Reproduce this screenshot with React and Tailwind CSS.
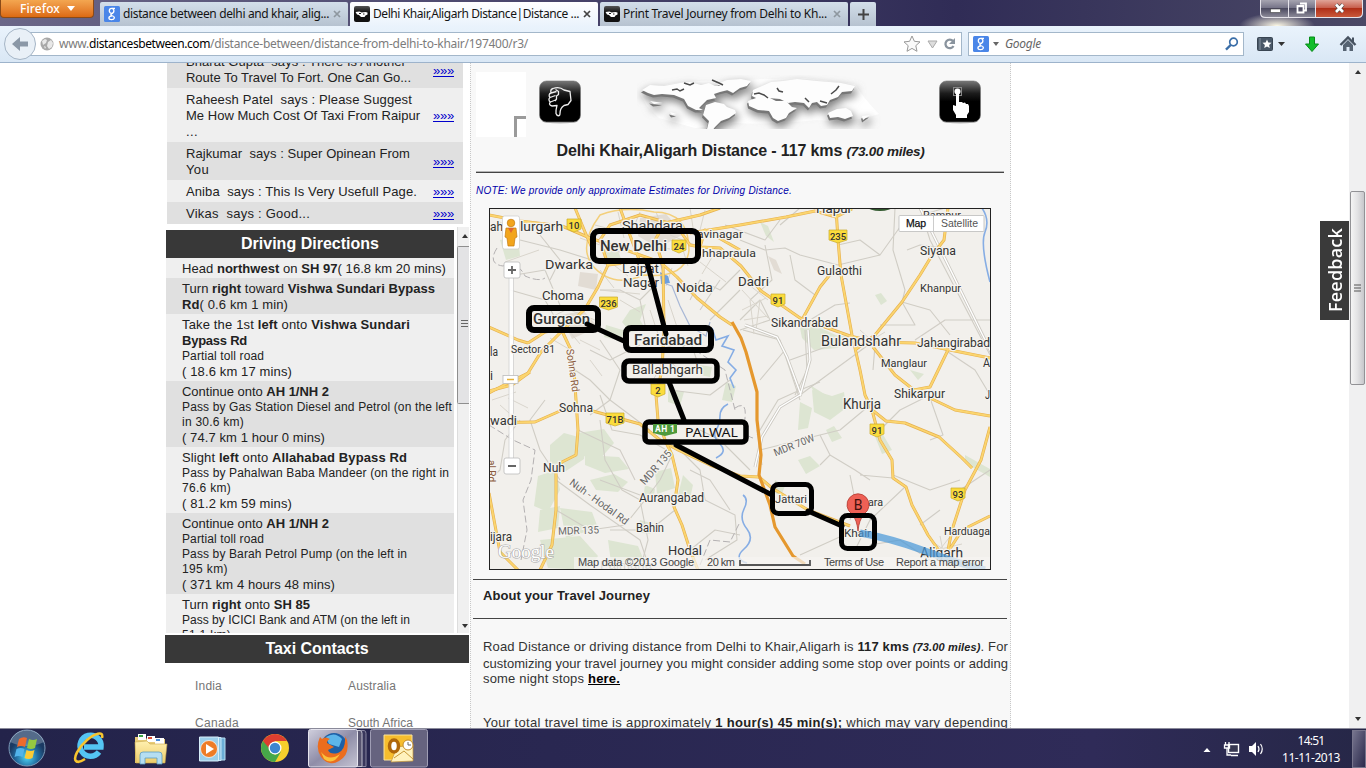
import React, { useLayoutEffect, useRef, useState } from "react";

// Text run spread or tightened to an exact advance width.
function Fit({ w, className = "", children }) {
  const ref = useRef(null);
  const [spacing, setSpacing] = useState(0);
  useLayoutEffect(() => {
    const el = ref.current;
    const natural = el.getBoundingClientRect().width;
    setSpacing((w - natural) / Math.max(1, el.textContent.length));
  }, [w]);
  return (
    <span ref={ref} className={`inline-block whitespace-pre ${className}`} style={{ letterSpacing: spacing }}>
      {children}
    </span>
  );
}

const GoogleFav = () => (
  <svg className="h-4 w-4 shrink-0" viewBox="0 0 16 16">
    <rect width="16" height="16" rx="1.5" fill="#4a86e8" />
    <g fill="none" stroke="#fff" strokeWidth="1.3">
      <ellipse cx="7.600" cy="4.800" rx="2.300" ry="2.500" />
      <path d="M8 2.300h3M9 7.100c-2 .8-3 1.600-1.200 2.400c2.600.8 2.800 1.600 2.500 2.700c-.5 2-5.300 1.900-5.400-.2c0-1.600 2-2.200 3.500-2.200" />
    </g>
  </svg>
);

const MapFav = () => (
  <svg className="h-4 w-4 shrink-0" viewBox="0 0 16 16">
    <defs><linearGradient id="fav" x2="0" y2="1"><stop offset="0" stopColor="#555" /><stop offset=".4" stopColor="#111" /></linearGradient></defs>
    <rect width="16" height="16" rx="2" fill="url(#fav)" />
    <path d="M1.500 6l4-.5 2 1 4-.5 2 .5v2l-2 1-1 1.500H7l-2-2-2-.5z" fill="#fff" />
    <path d="M5 7.500h2M9 8h1.500" stroke="#222" />
  </svg>
);

function Tab({ fav, title, w, active }) {
  return (
    <div
      className={
        "mr-[2px] mt-[2px] flex h-6 w-[248px] items-center rounded-t-[2px] pl-[4px] " +
        (active ? "bg-linear-to-b from-white to-[#eaf3fc]" : "bg-linear-to-b from-[#d3dfea] to-[#b6c2d0]")
      }
    >
      {fav}
      <span className="ml-[3px] w-[210px] text-[12px] text-[#141414]">
        <Fit w={w}>{title}</Fit>
      </span>
      <svg className="h-2 w-2" viewBox="0 0 8 8">
        <path d="M1 1l6 6M7 1l-6 6" stroke={active ? "#444" : "#8e979f"} strokeWidth="1.7" />
      </svg>
    </div>
  );
}

function TabStrip() {
  return (
    <div className="flex h-[26px] items-start bg-linear-to-r from-[#6b6788] via-[#302c56] via-70% to-[#4b4966]">
      <div className="flex h-[18px] w-[94px] items-center rounded-b-[4px] border border-t-0 border-[#8a4a18] bg-linear-to-b from-[#f3a650] to-[#dc6a10] pl-[19px] text-[12px] font-medium leading-[16px] text-white">
        <Fit w={40}>Firefox</Fit>
        <svg className="ml-[7px] h-[5px] w-[8px]" viewBox="0 0 8 5">
          <path d="M0 0h8L4 5z" fill="#fff" />
        </svg>
      </div>
      <div className="ml-[6px] flex">
        <Tab fav={<GoogleFav />} title="distance between delhi and khair, alig..." w={206} />
        <Tab fav={<MapFav />} title="Delhi Khair,Aligarh Distance|Distance ..." w={206} active />
        <Tab fav={<MapFav />} title="Print Travel Journey from Delhi to Kh..." w={204} />
        <div className="mt-[2px] flex h-6 w-[26px] items-center justify-center rounded-t-[2px] bg-linear-to-b from-[#d3dfea] to-[#b6c2d0]">
          <svg className="h-[11px] w-[11px]" viewBox="0 0 11 11">
            <path d="M5.500 0v11M0 5.500h11" stroke="#444" strokeWidth="2" />
          </svg>
        </div>
      </div>
      <svg className="ml-auto h-[26px] w-[131px]" viewBox="1235 0 131 26">
        <defs>
          <radialGradient id="glow"><stop offset="0" stopColor="#fffbe8" /><stop offset="1" stopColor="#fffbe8" stopOpacity="0" /></radialGradient>
          <linearGradient id="btn" x2="0" y2="1"><stop offset="0" stopColor="#a6a4b0" /><stop offset=".45" stopColor="#777589" /><stop offset=".5" stopColor="#4c4a60" /><stop offset="1" stopColor="#8b8998" /></linearGradient>
          <linearGradient id="cls" x2="0" y2="1"><stop offset="0" stopColor="#e0a498" /><stop offset=".45" stopColor="#c8604e" /><stop offset=".5" stopColor="#b02f18" /><stop offset="1" stopColor="#c9583a" /></linearGradient>
        </defs>
        <ellipse cx="1277" cy="26" rx="38" ry="13" fill="url(#glow)" />
        <path d="M1260 0h103v13q0 5-5 5h-93q-5 0-5-5z" fill="#e5e3ea" />
        <path d="M1261 0h27v17h-22q-5 0-5-4z" fill="url(#btn)" />
        <path d="M1289 0h26v17h-26z" fill="url(#btn)" />
        <path d="M1316 0h46v13q0 4-5 4h-41z" fill="url(#cls)" />
        <rect x="1270.500" y="9" width="10" height="3.500" fill="#fff" stroke="#444" strokeWidth=".6" />
        <path d="M1300 3.500h6v7h-2M1297.500 6h6v6.500h-6z" fill="none" stroke="#fff" strokeWidth="1.800" />
        <path d="M1336 4.500l7 7.500M1343 4.500l-7 7.500" stroke="#444" strokeWidth="4" />
        <path d="M1336 4.500l7 7.500M1343 4.500l-7 7.500" stroke="#fff" strokeWidth="2.600" />
      </svg>
    </div>
  );
}

function NavBar() {
  return (
    <div className="flex h-[37px] items-center border-b border-[#9db3cb] bg-linear-to-b from-[#eaf3fc] to-[#d9e7f5]">
      <svg className="h-9 w-10 shrink-0" viewBox="0 0 40 36">
        <path d="M30 6.500h10v23H30z" fill="#fff" />
        <path d="M28 6.500h12M28 29.500h12" stroke="#a3b7ca" />
        <circle cx="20" cy="18" r="15.500" fill="#e9f0f7" stroke="#a5b5c6" />
        <path d="M12 18l8-7v4.500h8v5h-8V25z" fill="#8b98a7" />
      </svg>
      <div className="flex h-6 w-[922px] items-center border border-l-0 border-[#a3b7ca] bg-white text-[12px] text-[#7c7c7c]">
        <svg className="h-[14px] w-[14px]" viewBox="0 0 14 14">
          <circle cx="7" cy="7" r="6.500" fill="#a8a8a8" />
          <path d="M2 4l3-2 2 1-1 3-3 2zM8 5l3-2 2 3-1 4-3 2-2-3zM4 9l2 1-1 2z" fill="#e8e8e8" />
        </svg>
        <span className="ml-[5px] flex">
          <Fit w={30}>www.</Fit>
          <Fit w={121} className="text-black">distancesbetween.com</Fit>
          <Fit w={318}>/distance-between/distance-from-delhi-to-khair/197400/r3/</Fit>
        </span>
        <svg className="ml-auto mr-[3px] h-[20px] w-[54px]" viewBox="904 34 54 20">
          <path d="M912 36l2.400 5.300 5.600.6-4.200 3.800 1.200 5.600-5-2.900-5 2.900 1.200-5.600-4.200-3.800 5.600-.6z" fill="#fafafa" stroke="#999" />
          <path d="M928 41h9l-4.500 7z" fill="#ddd" stroke="#aaa" />
          <path d="M953 41a4.300 4.300 0 1 0 .5 5" fill="none" stroke="#8a949e" strokeWidth="2.300" />
          <path d="M955 38v6h-6z" fill="#8a949e" />
        </svg>
      </div>
      <div className="ml-[6px] flex h-6 w-[276px] items-center border border-[#a3b7ca] bg-white pl-[4px] text-[12px] text-[#666]">
        <GoogleFav />
        <svg className="ml-[4px] h-[4px] w-[6px]" viewBox="0 0 6 4"><path d="M0 0h6L3 4z" fill="#666" /></svg>
        <Fit w={36} className="ml-[6px] italic">Google</Fit>
        <svg className="ml-auto mr-[4px] h-[14px] w-[14px]" viewBox="0 0 14 14">
          <circle cx="8.500" cy="5" r="3.800" fill="#fff" stroke="#3a6ea8" strokeWidth="1.700" />
          <path d="M5.700 8L1 12.700" stroke="#3a6ea8" strokeWidth="2.400" />
        </svg>
      </div>
      <svg className="h-6 w-[122px]" viewBox="1244 32 122 24">
        <rect x="1257.500" y="37.500" width="15" height="13" rx="1" fill="#4a5868" stroke="#394552" />
        <path d="M1260 38v12" stroke="#8794a1" />
        <path d="M1267 39.500l1.300 2.900 3.200.3-2.400 2.200.7 3.100-2.800-1.600-2.800 1.600.7-3.100-2.400-2.200 3.200-.3z" fill="#fff" />
        <path d="M1278 42h7l-3.500 4z" fill="#333" />
        <path d="M1309.500 37h5v7h4l-6.500 7.500-6.500-7.500h4z" fill="#12bd2b" stroke="#078c18" />
        <path d="M1340.500 45l7.500-7.500 7.500 7.500" fill="none" stroke="#465260" strokeWidth="2.400" />
        <path d="M1343 45l5-5 5 5v6h-3.500v-4h-3v4h-3.500z" fill="#566372" />
        <path d="M1352 37.500h2v5h-2z" fill="#465260" />
      </svg>
    </div>
  );
}

const comments = [
  { h: "h-[25px]", bg: "bg-[#e0e0e0]", lines: [["Bharat Gupta  says : There Is Another", 220], ["Route To Travel To Fort. One Can Go...", 225]], tail: true },
  { h: "h-[54px]", bg: "bg-[#efefef]", lines: [["Raheesh Patel  says : Please Suggest", 226], ["Me How Much Cost Of Taxi From Raipur", 234], ["...", 12]] },
  { h: "h-[38px]", bg: "bg-[#e0e0e0]", lines: [["Rajkumar  says : Super Opinean From", 224], ["You", 23]] },
  { h: "h-[22px]", bg: "bg-[#efefef]", lines: [["Aniba  says : This Is Very Usefull Page.", 231]] },
  { h: "h-[22px]", bg: "bg-[#e0e0e0]", lines: [["Vikas  says : Good...", 124]] },
];

function Comments() {
  return (
    <div className="ml-[2px] w-[296px]">
      {comments.map((c, i) => (
        <div key={i} className={`flex ${c.h} ${c.bg} overflow-hidden pl-[19px] ${c.tail ? "items-end pb-[2px]" : "items-center pt-[1px]"}`}>
          <div className="flex w-[247px] flex-col text-[13px] leading-[16px] text-[#222]">
            {c.lines.map(([t, w]) => (
              <div key={t}><Fit w={w}>{t}</Fit></div>
            ))}
          </div>
          <Fit w={21} className={`border-b border-[#0000cc] text-[13px] leading-[11px] text-[#0000cc] ${c.tail ? "mb-[9px]" : "mt-[1px]"}`}>»»»</Fit>
        </div>
      ))}
    </div>
  );
}

const B = ({ children }) => <b className="font-bold">{children}</b>;

const steps = [
  { h: "h-[20px]", rows: [[<>Head <B>northwest</B> on <B>SH 97</B>( 16.8 km 20 mins)</>, 264]] },
  { h: "h-[36px]", rows: [[<>Turn <B>right</B> toward <B>Vishwa Sundari Bypass</B></>, 253], [<><B>Rd</B>( 0.6 km 1 min)</>, 106]] },
  { h: "h-[67px]", rows: [[<>Take the 1st <B>left</B> onto <B>Vishwa Sundari</B></>, 228], [<B>Bypass Rd</B>, 65], ["Partial toll road", 82, 1], ["( 18.6 km 17 mins)", 110]] },
  { h: "h-[66px]", rows: [[<>Continue onto <B>AH 1/NH 2</B></>, 147], ["Pass by Gas Station Diesel and Petrol (on the left", 270, 1], ["in 30.6 km)", 62, 1], ["( 74.7 km 1 hour 0 mins)", 143]] },
  { h: "h-[66px]", rows: [[<>Slight <B>left</B> onto <B>Allahabad Bypass Rd</B></>, 225], ["Pass by Pahalwan Baba Mandeer (on the right in", 267, 1], ["76.6 km)", 49, 1], ["( 81.2 km 59 mins)", 110]] },
  { h: "h-[81px]", rows: [[<>Continue onto <B>AH 1/NH 2</B></>, 147], ["Partial toll road", 82, 1], ["Pass by Barah Petrol Pump (on the left in", 225, 1], ["195 km)", 46, 1], ["( 371 km 4 hours 48 mins)", 153]] },
  { h: "h-[39px]", rows: [[<>Turn <B>right</B> onto <B>SH 85</B></>, 128], ["Pass by ICICI Bank and ATM (on the left in", 228, 1], ["51.1 km)", 49, 1]] },
];

function Directions() {
  return (
    <div className="mt-[3px] flex h-[406px]">
      <div className="ml-[1px] w-[288px] pt-[3px]">
        <div className="flex h-7 items-center justify-center bg-[#383838] text-[16px] font-bold text-white">
          <Fit w={138}>Driving Directions</Fit>
        </div>
        {steps.map((s, i) => (
          <div key={i} className={`${s.h} ${i % 2 ? "bg-[#e0e0e0]" : "bg-[#efefef]"} overflow-hidden pl-[16px] pt-[3px] text-[#222]`}>
            {s.rows.map(([t, w, small], j) => (
              <div key={j} className={small ? "h-[15px] text-[12px] leading-[15px]" : "h-[16px] text-[13px] leading-[16px]"}>
                <Fit w={w}>{t}</Fit>
              </div>
            ))}
          </div>
        ))}
      </div>
      <svg className="ml-[3px] h-[406px] w-[12px]" viewBox="458 227 12 406">
        <path d="M458 227h12v406h-12z" fill="#f0f0f0" />
        <path d="M458.500 227v406" stroke="#ddd" />
        <path d="M463 238h6l-3-4z" fill="#333" />
        <path d="M463 624h6l-3 4z" fill="#333" />
        <rect x="458.500" y="246.500" width="14" height="157" rx="1" fill="#e3e3e5" stroke="#8e8e8e" />
        <path d="M462 320.500h7M462 323.500h7M462 326.500h7" stroke="#666" />
      </svg>
    </div>
  );
}

function Taxi() {
  return (
    <div className="mt-[2px]">
      <div className="flex h-7 items-center justify-center bg-[#383838] text-[16px] font-bold text-white">
        <Fit w={103}>Taxi Contacts</Fit>
      </div>
      <div className="grid grid-cols-[153px_1fr] gap-y-[21px] pl-[30px] pt-[15px] text-[12px] leading-[16px] text-[#757575]">
        <div><Fit w={27}>India</Fit></div>
        <div><Fit w={48}>Australia</Fit></div>
        <div><Fit w={44}>Canada</Fit></div>
        <div><Fit w={65}>South Africa</Fit></div>
      </div>
    </div>
  );
}

const Tile = ({ children }) => (
  <svg className="h-[44px] w-[42px] shrink-0" viewBox="0 0 42 44">
    <defs><linearGradient id="tile" x2="0" y2="1"><stop offset="0" stopColor="#777" /><stop offset=".3" stopColor="#1c1c1c" /><stop offset=".5" stopColor="#000" /></linearGradient></defs>
    <ellipse cx="21" cy="41" rx="18" ry="2.500" fill="#bbb" />
    <rect x=".5" y="1" width="41" height="41" rx="7" fill="url(#tile)" stroke="#777" strokeWidth=".6" />
    {children}
  </svg>
);

const continents = [
  "M642 90l8-5 14 1 16-3 10-1 11 3 8-2 6 3 10 0 3 4-8 2-6 2 2 4-9 2-5 5-3 3 4 2-7 0-8-4-4-7-10-4-12-1-8 1-6-2z",
  "M706 105l9-3 9 2 3 3 8 3 1 3-7 5-8 3-6 6-3 4-5-2 2-8-6-6z",
  "M717 84l10-4 14-1 10 2-4 5-7 2-7 5-6-3z",
  "M748 101l8-3 14 0 6 3 10 0 6 6 5 1-8 5-3 5-8 3-5-3-4-7-11-1-9-4z",
  "M752 96l1-6 9-4 9-4 12-1 14-2 20 2 24 2 14 3-3 5-10 1-4 5-8 3-3 5-6 1-4-4-5 1-3 5-5-5-9-1-7 1-8-4-12-1-10 1z",
  "M828 113l9-4 9-1 5 3 2 5-8 3-7-2-8 1z",
  "M650 101l13 2-9 1zM670 112l7 2-5 1zM862 116l8-1-7 5zM785 109l4-2-2 6z",
];

function WorldMap() {
  return (
    <svg className="h-[54px] w-[244px]" viewBox="637 75 244 54">
      <defs>
        <filter id="soft" x="-20%" y="-40%" width="140%" height="180%"><feGaussianBlur stdDeviation="4" /></filter>
      </defs>
      <path d="M640 94q18-12 60-13l105-3 50 6q10 16 24 30-30 10-62 6-50 5-80 3l-42 5-36-10-12-12z" fill="#fff" />
      <g transform="translate(1 5)" fill="#808080" stroke="#808080" strokeWidth="3" filter="url(#soft)">{continents.map((d) => <path key={d} d={d} />)}</g>
      <g transform="translate(-1 2.500)" fill="#777">{continents.map((d) => <path key={d} d={d} />)}</g>
      <g fill="#fdfdfd">{continents.map((d) => <path key={d} d={d} />)}</g>
      <path d="M672 90l5-1 3 2 4-2M684 83l6 2 4-2M712 80l7 3 4 2M754 94l5-1 5 2 4 3M777 88l2 3 4 1M805 98l4 4M831 94l5-4 3-4M820 101l7 2" fill="none" stroke="#4a4a4a" strokeWidth="1.500" />
    </svg>
  );
}

const yellowRoads = [
  "M489 393L506 384 528 373 541 352 562 331 585 309 598 287 608 265 640 261 656 268",
  "M489 327L518 340 528 343 545 332 562 329M489 391L512 385 530 372",
  "M489 215L520 221 562 226 590 238 620 248 660 262 677 277 697 298 720 317 732 325",
  "M608 265L600 240 610 225 640 215 676 225 690 245 700 247 720 248 741 266 761 291 800 318 850 336 875 342 915 343 950 350 990 358",
  "M663 262L664 330 662 370 656 395 658 420 665 440 672 455 678 480 674 507 682 525 690 550 698 570",
  "M562 331L571 350 574 370 576 400 578 430 576 455 562 462 556 470 556 510 552 545 540 570",
  "M489 423L535 422 560 411 578 407 600 413 640 424 660 440 678 450 710 465 740 476 759 477 772 488 808 510 850 526",
  "M836 208L838 240 841 275 852 335 860 370 865 395 872 410 880 440 892 460 893 478 906 487 912 505 928 535 940 552",
  "M948 208L944 240 931 257 920 275 902 302 875 335 855 350",
  "M803 318L820 287 832 272",
  "M690 233L740 225 786 217 815 211 836 217 852 209",
  "M873 347L895 375 914 390 930 387 948 350",
  "M871 409L886 421 905 423 939 437 962 458 972 468",
  "M930 398L955 410 990 416M990 427L981 460 965 490 952 530 946 560M946 555L962 530 990 516",
  "M489 493L500 552 518 570M662 262L655 240 665 223 700 215 720 208",
  "M620 208L628 230 640 262M575 208L585 232 592 248M700 247L705 230 740 250",
];

const grayRoads = [
  "M740 240L765 250 785 248 800 255 838 265 880 255 905 220 945 208",
  "M765 245L772 280 750 300M780 225L800 208M790 255L795 280 815 295 805 315",
  "M895 208L893 250 905 290 902 302 930 310 950 335M902 302L915 325 880 325",
  "M800 395L875 340M805 330L807 370 795 395M810 320L835 305 850 303",
  "M838 245L860 240 880 255M907 250L920 245 945 248",
  "M743 330L780 340 800 400M790 360L845 340M760 380L785 350",
  "M757 435L778 400 800 390 820 382M760 450L800 440 840 430 870 405M762 465L757 430",
  "M820 435L830 455 855 470 870 480M820 465L830 455M850 475L855 500 850 520M860 475L893 478M905 487L870 520 855 550",
  "M893 475L930 490 960 480M855 530L800 555M930 398L943 435 930 440M880 430L900 410 930 395",
  "M600 395L612 430 640 435 670 452M600 420L605 460 622 490 640 500 648 540 640 570",
  "M556 480L590 505 640 540 650 570M556 510L590 530 625 525 645 500 660 480 672 455",
  "M545 400L530 420 540 450 560 480M520 420L505 440 500 470 489 480M578 430L620 450 635 480",
  "M680 450L700 470 705 500 735 515 737 540 705 560M690 470L710 480 730 510M690 550L715 530 740 535",
  "M675 500L640 495 600 480M675 510L650 530 610 530M650 430L610 400 590 380 575 370",
  "M510 290L545 300 562 330M520 240L560 250 608 265M540 235L560 260 550 280M515 275L545 270 562 310",
  "M660 280L640 300 620 290 600 290M640 300L645 325M600 340L620 370 610 400 590 415",
  "M690 300L700 280 720 290 740 270M700 310L720 280M710 320L740 290M740 320L760 300 770 320 740 330M725 225L765 240 780 220",
  "M664 345L680 350 690 340 700 370M670 390L710 395 730 380M640 345L610 360 590 350M700 430L720 440 750 470",
  "M915 340L945 320 990 320M875 345L873 370M945 350L975 370 990 395M920 208L930 240 990 355M960 490L990 470M920 525L940 510M930 560L900 540 870 545",
];

const shortStreets = [
  "M600 270l14 18M610 262l18 14M618 212l6 26M640 212l-10 24M656 212l8 20M670 235l30 12M595 225l30 8M580 238l40 14M648 265l8 20M672 268l-6 18M680 240l8 26M600 290l40 4M620 300l20 12M560 320l20 24M570 310l30 12M580 340l20 10M550 338l24 14M545 320l25-12M590 360l12 16M650 310l8 24M668 300l10 30M650 385l12-20M668 360l14 12",
  "M508 398l20 10M500 405l18 16M492 400l24-8M500 222l20 14M505 262l34-12M700 262l26 20M714 254l-12 20M742 290l26 28M748 284l20 16M742 310l24-12M744 320l24-4M750 300l4 34M760 300l-4 30M930 540l20 14M952 534l-14 18M928 552l34-8M940 536l4 20M860 330l20 18M885 332l-26 16M690 208l4 26M705 210l-6 24M640 245l30 4M632 234l40-10",
];

const greens = [
  "M550 445l14-12 22 6-2 20-18 12-16-6z", "M578 433l26-4 10 14-14 16-22-4z", "M538 476l18-6 4 20-12 22-14-6z", "M540 510l20-4-2 22-20 4z",
  "M560 508l32 4 6 16-32 10z", "M585 455l34 2 10 12-24 4-20-8z", "M590 480l24-6 14 8-10 10-22-2z", "M540 540l40-4 18 20-10 14-40-2z",
  "M655 472l16-4 4 20-18 6zM645 485l10 4-2 12-10-2z", "M683 475l10 10-4 18-12-4z", "M798 318l14 6 26 12 8 0-8 12-24 2-12-12z",
  "M812 390l20 6 12-4 2 16-16 12-16-8zM800 402l12 6-4 20-10 2z", "M630 310l16-6-6 16 6 10-16 2-8-10z", "M606 325l20 6-6 10-16-4z",
  "M604 246l14 4 4 12-16-2z", "M668 388l16 4-4 14-12-4zM726 382l10 4-4 16-10-2z", "M500 240l18-4 2 20-14 4z", "M760 222l8 4 6 16-8-6z",
  "M798 460l12-4 10 10-14 8zM826 430l8-4 8 12-10 4z", "M810 385l16 10-8 4zM640 520l14 4-4 10-14-2z", "M870 424l8 2 14 24-10 4z", "M965 455l25 14v8l-25-14z",
  "M608 540l30 6 8 20-34 4z", "M775 480l10 6-4 10-8-4zM700 365l12 2-2 10-10-2z", "M875 295l6-2 6 8-6 4zM910 370l14 4-6 6z",
];

function ML({ x, y, w, s = 12.5, t, medium, fill = "#333", rot }) {
  return (
    <text
      x={x}
      y={y + s * 0.36}
      fontSize={s}
      fontWeight={medium ? 500 : 400}
      fill={fill}
      textLength={w}
      lengthAdjust="spacingAndGlyphs"
      stroke="#f5f3ef"
      strokeWidth="2.500"
      paintOrder="stroke"
      transform={rot ? `rotate(${rot} ${x} ${y})` : undefined}
    >
      {t}
    </text>
  );
}

const labels = [
  ["ah", 490, 226, 13], ["lurgarh", 520, 226, 43], ["Shahdara", 622, 225, 61], ["New Delhi", 600, 246, 67, 15, 1], ["Dwarka", 545, 264, 48, 13],
  ["Lajpat", 622, 268, 37], ["Nagar", 623, 282, 36], ["avinagar", 697, 234, 46, 11.5], ["hhapraula", 702, 253, 54, 11.5], ["Dadri", 738, 281, 31],
  ["Noida", 676, 287, 37, 13], ["Choma", 542, 295, 42, 12.5], ["Gurgaon", 533, 319, 57, 15, 1], ["Faridabad", 634, 340, 68, 15, 1], ["Ballabhgarh", 632, 369, 71, 13],
  ["Sector 81", 511, 349, 44, 10.5], ["la", 490, 351, 8], ["i", 490, 375, 3], ["Sohna", 559, 407, 34], ["Nuh", 543, 467, 22], ["Aurangabad", 639, 497, 65],
  ["Bahin", 636, 527, 28], ["Hodal", 668, 550, 34, 13.5], ["ijara", 490, 536, 22],
  ["Sikandrabad", 771, 322, 67], ["Bulandshahr", 821, 341, 80, 14.5], ["Jahangirabad", 917, 342, 73], ["Manglaur", 881, 363, 46, 11.5],
  ["Shikarpur", 894, 393, 51], ["Khurja", 843, 404, 38, 14], ["Gulaothi", 817, 270, 45], ["Siyana", 920, 250, 36], ["Khanpur", 920, 288, 41, 11.5],
  ["Hapur", 816, 208, 36, 13], ["Rampur", 923, 215, 38, 11.5], ["Jattari", 775, 499, 32, 11.5], ["ara", 868, 502, 15, 11.5],
  ["Khair", 844, 533, 27, 11.5], ["Harduaga", 944, 531, 46, 11.5], ["Aligarh", 920, 553, 43, 14], ["J", 985, 394, 5], ["A", 983, 362, 7],
];

const Shield = ({ x, y, t, w = 14 }) => (
  <g>
    <path d={`M${x - w / 2} ${y - 6}h${w}v10l-${w / 2} 3l-${w / 2}-3z`} fill="#fbdc3c" stroke="#c9a92c" strokeWidth=".7" />
    <text x={x} y={y + 3.500} fontSize="9.500" fontWeight="500" textAnchor="middle" fill="#333">{t}</text>
  </g>
);

function RouteMap() {
  return (
    <svg className="h-[362px] w-[502px]" viewBox="489 208 502 362" fontFamily="Roboto, sans-serif">
      <rect x="489" y="208" width="502" height="362" fill="#f2f0ec" />
      <g fill="#dde5d2">{greens.map((d) => <path key={d} d={d} />)}</g>
      <path d="M580 272l18 2-2 16-18-4zM640 218l26-4 18 20-26 14-20-12zM560 315l24-4 14 16-26 12zM768 256l8 4 6 14-8-4z" fill="#e2dcd4" />
      <ellipse cx="880" cy="207" rx="12" ry="4" fill="#32592f" />
      <g fill="none" stroke="#d0cdc5" strokeWidth="1.100" strokeLinejoin="round">{grayRoads.map((d) => <path key={d} d={d} />)}</g>
      <g fill="none" stroke="#d9d5cc" strokeWidth="1">{shortStreets.map((d) => <path key={d} d={d} />)}</g>
      <path d="M489 425l24 15 22 10-4 30 -8 20 4 30-6 30M497 248q-10 16 6 18 14-6 22 10 14 6 20 2M695 350l30 20 10 40M700 565l10-25 20 2 10-20M735 408q12-8 10 10t8 20" fill="none" stroke="#b4b1b2" strokeWidth="1" strokeDasharray="7 3" />
      <path d="M800 395l-20 12-18 30-7 30M808 330l2 30-10 36M745 325l32 12 10 20 14 38M920 208l72 146" fill="none" stroke="#cbc8c1" strokeWidth="3" />
      <path d="M800 395l-20 12-18 30-7 30M808 330l2 30-10 36M745 325l32 12 10 20 14 38M920 208l72 146" fill="none" stroke="#fff" strokeWidth="1.400" />
      <path d="M659 260q6 14 3 18t10 8l8 20 10 20 16 10 4-14" fill="none" stroke="#a9b8d6" strokeWidth="1.200" />
      <path d="M712 328l4 12 12-4-6 10 12 4-6 12 8 8-6 8 4 10M728 404q-8 4-8 12t-4 14 4 14-4 14M743 495q6 4 1 14t3 20-3 20 3 14M982 208q8 12 3 24t5 50" fill="none" stroke="#86ade4" strokeWidth="1.600" />
      <path d="M660 272l8 4 2 7-9 1z" fill="#6fa0dd" />
      <path d="M600 215q-22 30-8 50 20 24 52 10 42 4 45-25 0-38-35-38-30-6-54 3z" fill="none" stroke="#f3cf7b" strokeWidth="1.500" />
      <g fill="none" stroke="#e6b04e" strokeWidth="3" strokeLinejoin="round">{yellowRoads.map((d) => <path key={d} d={d} />)}</g>
      <g fill="none" stroke="#fbd56f" strokeWidth="1.800" strokeLinejoin="round">{yellowRoads.map((d) => <path key={d} d={d} />)}</g>
      <path d="M732 322L741 338 746 352 757 392 757 420 761 455 759 475 770 505 775 527 793 556 805 564" fill="none" stroke="#e5982e" strokeWidth="3.200" strokeLinejoin="round" />

      <rect x="509" y="278" width="4" height="180" fill="#fff" fillOpacity=".9" />
      <path d="M509 278v180M513.500 278v180" stroke="#d0d0d0" strokeWidth=".8" />

      {labels.map(([t, x, y, w, s, m]) => <ML key={t + x} t={t} x={x} y={y} w={w} s={s} medium={m} />)}
      <ML t="wadi" x={490} y={420} w={27} />
      <ML t="Sohna Rd" x={570} y={349} w={43} s={10.5} fill="#8a5a3c" rot={82} />
      <ML t="al Rd" x={492} y={460} w={22} s={10} fill="#8a5a3c" rot={90} />
      <ML t="Nuh - Hodal Rd" x={571} y={481} w={70} s={10.5} fill="#666" rot={36} />
      <ML t="MDR 135" x={642} y={483} w={42} s={10.5} fill="#666" rot={-49} />
      <ML t="MDR 135" x={558} y={531} w={41} s={10.5} fill="#666" rot={-2} />
      <ML t="MDR 70W" x={774} y={453} w={43} s={10.5} fill="#666" rot={-22} />
      <path d="M860 533Q890 538 925 551T985 570" fill="none" stroke="#4a98d8" strokeOpacity=".72" strokeWidth="7" />

      <Shield x={574} y={225} t="10" />
      <Shield x={679} y={246} t="24" />
      <Shield x={608.500} y={303} t="236" w={18} />
      <Shield x={838} y={236} t="235" w={18} />
      <Shield x={778} y={300} t="91" />
      <Shield x={658} y={390} t="2" />
      <Shield x={615} y={419} t="71B" w={18} />
      <Shield x={877} y={430} t="91" />
      <Shield x={958} y={494} t="93" />

      <path d="M858 531q-1-11-6-17a11 11 0 1 1 12 0q-5 6-6 17z" fill="#ee6055" stroke="#b33a30" strokeWidth=".8" />
      <text x="858" y="510" fontSize="14" textAnchor="middle" fill="#41100c">B</text>

      <g fill="none" stroke="#000" strokeWidth="6">
        <rect x="593" y="231" width="105" height="30" rx="6" />
        <rect x="529" y="308" width="69" height="22" rx="5" />
        <rect x="626" y="328" width="85" height="22" rx="5" />
        <rect x="624" y="361" width="93" height="20" rx="5" strokeWidth="5.500" />
        <rect x="645" y="422" width="101" height="20" rx="4" strokeWidth="5.500" />
        <rect x="772.500" y="484.500" width="39" height="29" rx="6" strokeWidth="5" />
        <rect x="841.500" y="515.500" width="33" height="33" rx="6" strokeWidth="5" />
        <path d="M647 262L666 334M587 324L626 342M669 382L684 420M676 445L772 495M808 511L842 526" strokeWidth="5" strokeLinecap="round" />
      </g>
      <path d="M653 424h24v9l-12 3-12-3z" fill="#4f9a3c" />
      <text x="655" y="432" fontSize="8.500" fontWeight="700" fill="#fff" textLength="20">AH 1</text>
      <text x="685" y="437" fontSize="13" fontFamily="Noto Sans, sans-serif" fill="#111" textLength="53" lengthAdjust="spacingAndGlyphs">PALWAL</text>

      <rect x="502.500" y="216" width="17" height="33" rx="2" fill="#fff" stroke="#ccc" strokeWidth=".7" />
      <path d="M506 228h10l1 9-2 1-1 8h-6l-1-8-2-1z" fill="#f2a51d" stroke="#c47a10" strokeWidth=".7" />
      <circle cx="511" cy="223" r="3.800" fill="#f2a51d" stroke="#c47a10" strokeWidth=".7" />
      <path d="M508 228h6l-3 5z" fill="#e06632" />
      <g fill="#fff" stroke="#bbb" strokeWidth=".8">
        <rect x="504" y="262" width="16" height="16" rx="2" />
        <rect x="504" y="458" width="16" height="16" rx="2" />
        <rect x="503" y="375.500" width="15" height="8" />
      </g>
      <path d="M508 270h8M512 266v8M508 466h8" stroke="#666" strokeWidth="1.800" />
      <path d="M507 379.500h7" stroke="#e5b23a" strokeWidth="1.500" />

      <g fontFamily="Liberation Sans, sans-serif" fontSize="11">
        <rect x="899" y="215.500" width="85" height="16" rx="1" fill="#fff" stroke="#bbb" strokeWidth=".8" />
        <path d="M933.500 216v15" stroke="#ccc" />
        <text x="906" y="227" textLength="20" fontSize="10.500" fill="#111" stroke="#111" strokeWidth=".25">Map</text>
        <text x="941" y="227" textLength="37" fontSize="10.500" fill="#555">Satellite</text>
        <ML t="Palmana" x={600} y={565} w={52} s={11} fill="#999" />
        <rect x="574" y="557" width="417" height="13" fill="#f5f4f1" fillOpacity=".72" />
        <g fill="#444">
          <text x="578" y="566" textLength="116">Map data ©2013 Google</text>
          <text x="707" y="566" textLength="28">20 km</text>
          <text x="824" y="566" textLength="60">Terms of Use</text>
          <text x="896" y="566" textLength="88">Report a map error</text>
        </g>
        <path d="M740 560v5h70v-5" fill="none" stroke="#555" strokeWidth="1.800" />
      </g>
      <text x="498" y="558" fontFamily="Liberation Serif, serif" fontSize="19" textLength="56" lengthAdjust="spacingAndGlyphs" fill="#fff" stroke="#aaa" strokeWidth="1.200" paintOrder="stroke">Google</text>
      <rect x="489.500" y="208.500" width="501" height="361" fill="none" stroke="#222" />
    </svg>
  );
}

function Main() {
  return (
    <main className="ml-[1px] h-[665px] w-[541px] shrink-0 overflow-hidden border-x border-dotted border-[#c8c8c8] bg-[#f8f8f8] text-[#222]">
      <div className="flex h-[75px] pl-[5px] pt-[9px]">
        <div className="flex h-[65px] w-[50px] items-end justify-end bg-white">
          <div className="h-[21px] w-[12px] border-l-[3px] border-t-[3px] border-[#9a9a9a]" />
        </div>
        <div className="ml-[13px] mt-[8px]">
          <Tile>
            <path d="M14 8.500c4-1.500 8-1 11 1.500l6 1.500 1 9-3 4-4 1c-3 2-4 4-4 8 0 3-3 3-4 0-.5-3 .5-6 1-8l-5 .5c-3-.5-3-3-1.500-4-2-1-2-3.500-.5-4.500-1.500-1.500-1-4 1-4.500-.5-2 0-4 2-4.500zM11.500 22l5-2M11 17.500l5.500-2M12 13l5.500-1.500M16.500 9.500l3 2v3l-2 1.500v3l-1.500 2" fill="none" stroke="#eee" strokeWidth="1.300" strokeLinejoin="round" />
          </Tile>
        </div>
        <div className="ml-[56px] mt-[3px]"><WorldMap /></div>
        <div className="ml-[58px] mt-[8px]">
          <Tile>
            <rect x="14.500" y="7.500" width="8" height="8" fill="none" stroke="#888" />
            <circle cx="18.500" cy="11.500" r="3" fill="#fff" />
            <path d="M17 12h3v10h3l1 1 2-.5 1 1.500 2 0 1 2v6l-2 3v3H17v-3l-3-5v-5l3 1z" fill="#fff" />
          </Tile>
        </div>
      </div>
      <h1 className="flex h-[33px] items-center justify-center pb-[7px] text-[16px] font-bold">
        <Fit w={290}>{"Delhi Khair,Aligarh Distance - 117 kms "}</Fit>
        <Fit w={78} className="pt-[2px] text-[13.5px] italic">(73.00 miles)</Fit>
      </h1>
      <div className="ml-[5px] h-[2px] w-[528px] border-b border-[#444] bg-[#b5b5b5]" />
      <div className="flex h-[35px] items-center pl-[5px] text-[10px] italic text-[#0000aa]">
        <Fit w={316}>NOTE: We provide only approximate Estimates for Driving Distance.</Fit>
      </div>
      <div className="ml-[18px] h-[362px]"><RouteMap /></div>
      <div className="ml-[2px] mt-[9px] h-[1px] w-[534px] bg-[#444]" />
      <div className="flex h-[32px] items-center pl-[12px] text-[13px] font-bold"><Fit w={167}>About your Travel Journey</Fit></div>
      <div className="ml-[2px] mt-[6px] h-[1px] w-[534px] bg-[#444]" />
      <div className="pl-[12px] pt-[20px] text-[13px] leading-[16px] text-[#333]">
        <div className="h-[17px]">
          <Fit w={525}>Road Distance or driving distance from Delhi to Khair,Aligarh is <b className="text-[#222]">117 kms</b> <b className="text-[11px] italic text-[#222]">(73.00 miles)</b>. For</Fit>
        </div>
        <div className="h-[15px]"><Fit w={525}>customizing your travel journey you might consider adding some stop over points or adding</Fit></div>
        <div className="h-[44px]"><Fit w={137}>some night stops <b className="text-black underline">here.</b></Fit></div>
        <div><Fit w={525}>Your total travel time is approximately <b className="text-[#222]">1 hour(s) 45 min(s);</b> which may vary depending</Fit></div>
      </div>
    </main>
  );
}

function Page() {
  return (
    <div className="flex h-[665px] bg-white pl-[165px]">
      <aside className="h-[665px] w-[304px] shrink-0 overflow-hidden">
        <Comments />
        <Directions />
        <Taxi />
      </aside>
      <Main />
      <div className="ml-auto flex items-start">
        <div className="mt-[158px] flex h-[99px] w-[29px] items-center justify-center bg-[#3a3a3a] text-white">
          <span className="rotate-180 font-['Open_Sans',sans-serif] text-[18px] font-semibold leading-[24px] tracking-[0.2px] [writing-mode:vertical-rl]">Feedback</span>
        </div>
        <svg className="h-[665px] w-[17px]" viewBox="1349 63 17 665">
          <path d="M1349 63h17v665h-17z" fill="#f0f0f1" />
          <path d="M1355 74h6l-3-4zM1355 717h6l-3 4z" fill="#333" />
          <defs><linearGradient id="thumb"><stop offset="0" stopColor="#f6f6f6" /><stop offset=".5" stopColor="#e2e2e4" /><stop offset="1" stopColor="#c5c5c9" /></linearGradient></defs>
          <rect x="1350.500" y="191.500" width="14" height="193" rx="1.500" fill="url(#thumb)" stroke="#929296" />
          <path d="M1354 285h7M1354 288h7M1354 291h7" stroke="#555" strokeWidth="1.200" />
        </svg>
      </div>
    </div>
  );
}

function Taskbar() {
  return (
    <div className="flex h-10 items-center justify-between border-t border-[#8a8a9a] bg-linear-to-r from-[#23234a] via-[#2f2b58] via-80% to-[#262747] text-white">
      <svg className="h-[39px] w-[440px]" viewBox="0 729 440 39">
        <defs>
          <radialGradient id="orb" cy=".75"><stop offset="0" stopColor="#4fd8f8" /><stop offset=".6" stopColor="#236da0" /><stop offset="1" stopColor="#1b3a63" /></radialGradient>
          <linearGradient id="act" x2="1" y2="1"><stop offset="0" stopColor="#d0cfdd" /><stop offset=".5" stopColor="#8f8da8" /><stop offset="1" stopColor="#c4c3d2" /></linearGradient>
          <linearGradient id="fold" x2="0" y2="1"><stop offset="0" stopColor="#fff0b0" /><stop offset="1" stopColor="#edcc6a" /></linearGradient>
        </defs>
        <circle cx="27" cy="748" r="18" fill="url(#orb)" stroke="#7d9ab8" />
        <path d="M10 742a18 18 0 0 1 34 0q-17 8-34 0z" fill="#fff" fillOpacity=".25" />
        <path d="M19 739q4-3 8-1l-2 9q-4-2-8 0z" fill="#ee6b2d" />
        <path d="M29 739q4 2 8 0l-2 9q-4 2-8 0z" fill="#95c940" />
        <path d="M16.500 749q4-2 8 0l-2 8q-4-2-8 0z" fill="#52b4ea" />
        <path d="M26.500 750q4 2 8 0l-2 8q-4 2-8 0z" fill="#fccb35" />

        <path d="M99 752a10.500 10.500 0 1 1 2-5H84" fill="none" stroke="#54c5f4" strokeWidth="5.500" />
        <path d="M102 738c2-8-8-4-15 2-9 8-14 18-11 21 2 2 6 0 9-2" fill="none" stroke="#f7c52e" strokeWidth="2.600" />

        <path d="M135 737h10l2 2h18v24h-30z" fill="#e8cc79" />
        <path d="M138 734h8v6h-8z" fill="#fff" /><path d="M139 735h4v2h-4z" fill="#3da645" />
        <path d="M147 736h8v6h-8zM155 738h9v6h-9z" fill="#fff" /><path d="M148 737h4v2h-4z" fill="#db4c36" /><path d="M156 739h4v2h-4z" fill="#4c8fda" />
        <path d="M135 742l12-1 3 3h17l-2 19h-29z" fill="url(#fold)" stroke="#c9a94c" strokeWidth=".6" />
        <path d="M140 764v-9q0-3 3-3h16q3 0 3 3v9h-5v-6h-12v6z" fill="#b5def2" stroke="#5c9cc3" strokeWidth=".8" />

        <path d="M206 738h19v22h-19z" fill="#6baed6" stroke="#b8def2" /><path d="M203 737.500h18v23h-18z" fill="#8cc6e6" stroke="#c5e5f6" /><path d="M199.500 737h19v24h-19z" fill="#9ccfea" stroke="#d8eefa" />
        <circle cx="209" cy="749" r="8.500" fill="#ee7c27" stroke="#fff" strokeOpacity=".7" /><path d="M206 744l8 5-8 5z" fill="#fff" />

        <circle cx="275" cy="748" r="14" fill="#f7cf2c" />
        <path d="M275 741h12.100a14 14 0 0 0-24.200 0l6 10z" fill="#dd3e30" />
        <path d="M262.900 741a14 14 0 0 0 12.100 21l6-10.500-6 3.500z" fill="#46a849" />
        <circle cx="275" cy="748" r="6.500" fill="#fff" /><circle cx="275" cy="748" r="5.200" fill="#3d86d0" />

        <path d="M350 730.500h14q2 0 2 3v33h-16z" fill="#39375c" stroke="#8886a0" />
        <path d="M350 730.500h10q2 0 2 3v33h-12z" fill="#56536f" stroke="#c0bfcd" />
        <rect x="308.500" y="729.500" width="49" height="37.500" rx="2" fill="url(#act)" stroke="#e5e4ee" />
        <circle cx="334" cy="746" r="13" fill="#1d5fa6" /><path d="M326 737q9-6 16 2l-3 8-10-3z" fill="#5cb5e9" />
        <path d="M320 737q-5 11 1 20 8 10 18 4 11-6 8-21l-2-4q1 14-7 17-8 2-10-3l6-3-7-4q0-3 3-4-5-3-8 0z" fill="#eb6d1e" />
        <path d="M321 752q8 10 19 2-7 12-16 5z" fill="#fbc13a" />

        <rect x="370.500" y="729.500" width="57" height="37.500" rx="2" fill="#66637f" stroke="#9f9db4" />
        <path d="M384 735h28v25h-28z" fill="#f7bd2d" stroke="#fbe49b" />
        <path d="M397 747l16-2v16l-22 1z" fill="#fff2be" stroke="#c69737" strokeWidth=".7" /><path d="M394 758l10-7 9 8" fill="none" stroke="#c69737" />
        <ellipse cx="394" cy="746" rx="4.500" ry="6" fill="#fff" stroke="#b0670a" strokeWidth="3.500" />
        <circle cx="408" cy="745" r="5" fill="#fff" stroke="#c48a25" /><path d="M408 742v3h3" fill="none" stroke="#666" />
      </svg>
      <div className="flex items-center">
        <svg className="h-[39px] w-[65px]" viewBox="1201 729 65 39">
          <path d="M1203.500 752h7l-3.500-4z" fill="#fff" />
          <rect x="1228.500" y="744.500" width="10" height="8" fill="#383852" stroke="#fff" strokeWidth="1.400" />
          <path d="M1231 755.500h7M1225.500 742v3M1229 742v3M1224.500 745h5v3h-5zM1227 748v7h4" fill="none" stroke="#fff" strokeWidth="1.300" />
          <path d="M1249 746h3l4-4v14l-4-4h-3z" fill="#fff" />
          <path d="M1258 746q2 3 0 6M1260.500 744q3.500 5 0 10" fill="none" stroke="#fff" strokeWidth="1.200" />
        </svg>
        <div className="ml-[15px] flex w-[60px] flex-col items-center text-[12px] leading-[17px]">
          <Fit w={27}>14:51</Fit>
          <Fit w={58}>11-11-2013</Fit>
        </div>
        <div className="ml-[11px] h-[38px] w-[14px] border border-[#77758c] bg-linear-to-br from-[#77758e] to-[#2c2a4c]" />
      </div>
    </div>
  );
}

export default function App() {
  return (
    <div className="flex h-[768px] w-[1366px] flex-col overflow-hidden bg-white font-['Liberation_Sans',sans-serif]">
      <div className="font-['Noto_Sans',sans-serif]">
        <TabStrip />
        <NavBar />
      </div>
      <Page />
      <div className="font-['Noto_Sans',sans-serif]">
        <Taskbar />
      </div>
    </div>
  );
}
